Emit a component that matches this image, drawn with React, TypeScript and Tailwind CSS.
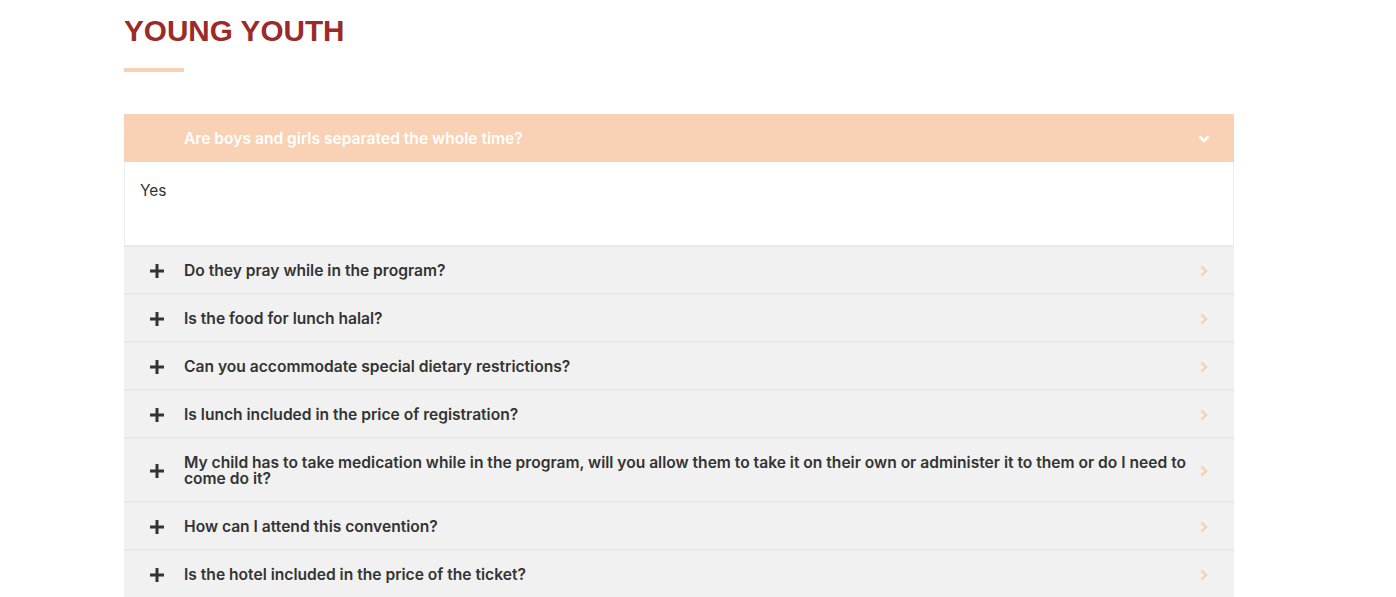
import { useState } from 'react'

const QUESTIONS = [
  { q: 'Are boys and girls separated the whole time?', a: 'Yes' },
  { q: 'Do they pray while in the program?', a: 'Yes' },
  { q: 'Is the food for lunch halal?', a: 'Yes' },
  { q: 'Can you accommodate special dietary restrictions?', a: 'Yes' },
  { q: 'Is lunch included in the price of registration?', a: 'Yes' },
  {
    q: 'My child has to take medication while in the program, will you allow them to take it on their own or administer it to them or do I need to come do it?',
    a: 'Yes',
  },
  { q: 'How can I attend this convention?', a: 'Yes' },
  { q: 'Is the hotel included in the price of the ticket?', a: 'Yes' },
]

function PlusIcon() {
  return (
    <svg width="14" height="14" viewBox="0 0 14 14" className="shrink-0">
      <path d="M7 0v14M0 7h14" stroke="#333" strokeWidth="3" />
    </svg>
  )
}

function Chevron({ open }: { open: boolean }) {
  return open ? (
    <svg width="12" height="8" viewBox="0 0 12 8" className="ml-[4px] -mr-[2px] shrink-0">
      <path d="M1.5 1.5l4.5 4.5 4.5-4.5" stroke="#fff" strokeWidth="2.6" fill="none" />
    </svg>
  ) : (
    <svg width="8" height="12" viewBox="0 0 8 12" className="ml-[8px] shrink-0">
      <path d="M1.5 1.5l4.5 4.5-4.5 4.5" stroke="#f9d1b4" strokeWidth="2.6" fill="none" />
    </svg>
  )
}

export default function App() {
  const [openIdx, setOpenIdx] = useState(0)

  return (
    <div className="min-h-screen bg-white font-['Inter',sans-serif]">
      <div className="mx-auto w-[1110px] -translate-x-[19px] pt-[14px]">
        <h2 className="font-['Liberation_Sans',Arial,sans-serif] text-[29.7px] font-bold leading-[34px] text-[#9b2b2b]">
          YOUNG YOUTH
        </h2>
        <div className="mt-[20px] h-[4px] w-[60px] bg-[#f9d1b4]" />

        <div className="mt-[42px]">
          {QUESTIONS.map((item, i) => {
            const open = i === openIdx
            return (
              <div key={item.q}>
                <button
                  onClick={() => setOpenIdx(open ? -1 : i)}
                  className={
                    open
                      ? 'flex w-full items-center bg-[#f9d1b4] pt-[17px] pb-[15px] pl-[26px] pr-[26px] text-left'
                      : 'flex w-full items-center border-t-2 border-[#e9e9e9] bg-[#f1f1f1] pt-[16px] pb-[14px] pl-[26px] pr-[26px] text-left'
                  }
                >
                  <span className="mr-[20px] flex w-[14px] justify-center">{!open && <PlusIcon />}</span>
                  <span
                    className={
                      open
                        ? 'flex-1 text-[15.6px] font-semibold leading-[16px] text-white'
                        : 'flex-1 text-[15.6px] font-semibold leading-[16px] text-[#333]'
                    }
                  >
                    {item.q}
                  </span>
                  <Chevron open={open} />
                </button>
                {open && (
                  <div className="h-[83px] border-x border-[#eeeeee] bg-white px-[15px] pt-[20px] text-[15.5px] leading-[18px] text-[#333]">
                    {item.a}
                  </div>
                )}
              </div>
            )
          })}
        </div>
      </div>
    </div>
  )
}
